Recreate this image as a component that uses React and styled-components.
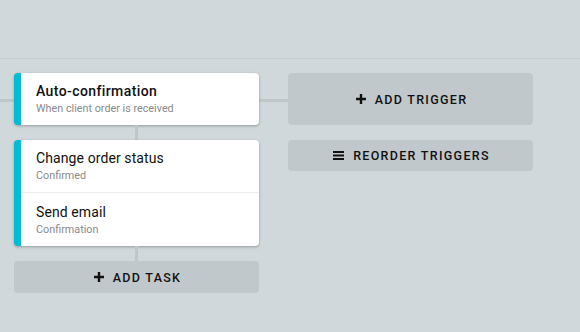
import React from 'react';
import styled, { createGlobalStyle } from 'styled-components';

const GlobalStyle = createGlobalStyle`
  html, body {
    margin: 0;
    padding: 0;
    background: #d0d8db;
    font-family: Roboto, "Liberation Sans", Arial, sans-serif;
  }
`;

const Page = styled.div`
  width: 580px;
  height: 332px;
  background: #d0d8db;
  overflow: hidden;
`;

const Header = styled.header`
  height: 58px;
  border-bottom: 1px solid #c5cdd0;
`;

const Canvas = styled.main`
  position: relative;
  display: flex;
  gap: 29px;
  padding: 14px;

  /* trigger line running behind the first row */
  &::before {
    content: '';
    position: absolute;
    left: 0;
    top: 40px;
    width: 288px;
    height: 3px;
    background: #bfc7ca;
  }
`;

const Column = styled.div`
  position: relative;
  z-index: 1;
  width: 245px;
  display: flex;
  flex-direction: column;
  gap: ${p => p.$gap || 0}px;
`;

const Card = styled.div`
  background: #fff;
  border-radius: 4px;
  border-left: 7px solid #00bcd4;
  box-shadow: 0 1px 3px rgba(0, 0, 0, 0.28);
  overflow: hidden;
`;

const Item = styled.div`
  height: ${p => p.$h}px;
  box-sizing: border-box;
  padding: ${p => p.$pt}px 12px 0 15px;
  & + & {
    border-top: 1px solid #ededed;
  }
`;

const Title = styled.div`
  font-size: 14px;
  line-height: 18px;
  font-weight: ${p => (p.$bold ? 500 : 400)};
  color: #111;
  letter-spacing: ${p => (p.$bold ? 0.4 : 0.1)}px;
`;

const Sub = styled.div`
  margin-top: 2px;
  font-size: 10.8px;
  line-height: 14px;
  color: #8a8a8a;
`;

const Link = styled.div`
  align-self: center;
  width: 3px;
  height: 15px;
  background: #bfc7ca;
`;

const ActionButton = styled.button`
  height: ${p => p.$h}px;
  width: 100%;
  border: none;
  border-radius: 4px;
  background: #c1c8cb;
  display: flex;
  align-items: center;
  justify-content: center;
  gap: 9px;
  font-family: Roboto, "Liberation Sans", Arial, sans-serif;
  font-size: 12.5px;
  font-weight: 500;
  letter-spacing: 1.3px;
  text-transform: uppercase;
  color: #111;
  padding: 0 0 0 2px;
  cursor: pointer;
`;

const PlusIcon = () => (
  <svg width="10" height="10" viewBox="0 0 10 10">
    <path d="M3.8 0h2.4v3.8H10v2.4H6.2V10H3.8V6.2H0V3.8h3.8z" fill="#111" />
  </svg>
);

const MenuIcon = () => (
  <svg width="11" height="9" viewBox="0 0 11 9">
    <rect x="0" y="0" width="11" height="2" fill="#111" />
    <rect x="0" y="3.5" width="11" height="2" fill="#111" />
    <rect x="0" y="7" width="11" height="2" fill="#111" />
  </svg>
);

export default function App() {
  return (
    <Page>
      <GlobalStyle />
      <Header />
      <Canvas>
        <Column>
          <Card>
            <Item $h={52} $pt={9}>
              <Title $bold>Auto-confirmation</Title>
              <Sub>When client order is received</Sub>
            </Item>
          </Card>
          <Link />
          <Card>
            <Item $h={52} $pt={9}>
              <Title>Change order status</Title>
              <Sub>Confirmed</Sub>
            </Item>
            <Item $h={54} $pt={10}>
              <Title>Send email</Title>
              <Sub>Confirmation</Sub>
            </Item>
          </Card>
          <Link />
          <ActionButton $h={32}>
            <PlusIcon />
            Add task
          </ActionButton>
        </Column>
        <Column $gap={15}>
          <ActionButton $h={52}>
            <PlusIcon />
            Add trigger
          </ActionButton>
          <ActionButton $h={31}>
            <MenuIcon />
            Reorder triggers
          </ActionButton>
        </Column>
      </Canvas>
    </Page>
  );
}
